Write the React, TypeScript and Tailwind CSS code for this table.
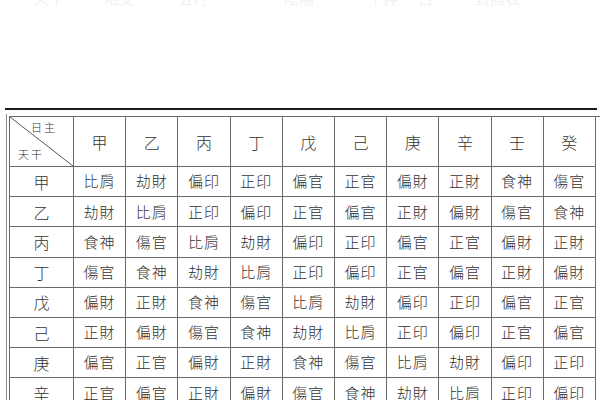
import React from "react";

const STEMS = ["甲", "乙", "丙", "丁", "戊", "己", "庚", "辛", "壬", "癸"];

const ROWS: [string, string[]][] = [
  ["甲", ["比肩", "劫財", "偏印", "正印", "偏官", "正官", "偏財", "正財", "食神", "傷官"]],
  ["乙", ["劫財", "比肩", "正印", "偏印", "正官", "偏官", "正財", "偏財", "傷官", "食神"]],
  ["丙", ["食神", "傷官", "比肩", "劫財", "偏印", "正印", "偏官", "正官", "偏財", "正財"]],
  ["丁", ["傷官", "食神", "劫財", "比肩", "正印", "偏印", "正官", "偏官", "正財", "偏財"]],
  ["戊", ["偏財", "正財", "食神", "傷官", "比肩", "劫財", "偏印", "正印", "偏官", "正官"]],
  ["己", ["正財", "偏財", "傷官", "食神", "劫財", "比肩", "正印", "偏印", "正官", "偏官"]],
  ["庚", ["偏官", "正官", "偏財", "正財", "食神", "傷官", "比肩", "劫財", "偏印", "正印"]],
  ["辛", ["正官", "偏官", "正財", "偏財", "傷官", "食神", "劫財", "比肩", "正印", "偏印"]],
];

// faint leftovers of the line above, cut off by the top edge
const TOP_BITS = [
  { ml: "ml-[34px]", t: "天干" },
  { ml: "ml-[40px]", t: "地支" },
  { ml: "ml-[44px]", t: "五行" },
  { ml: "ml-[76px]", t: "陰陽" },
  { ml: "ml-[54px]", t: "十神" },
  { ml: "ml-[20px]", t: "日" },
  { ml: "ml-[42px]", t: "對照表" },
];

const cjk = "font-['Noto_Sans_CJK_TC','Noto_Sans_CJK_SC',sans-serif]";

export default function App() {
  return (
    <div className={`w-[600px] h-[400px] overflow-hidden bg-white ${cjk}`}>
      {/* cut-off text band */}
      <div className="h-[10px] overflow-hidden">
        <div className="flex -mt-[10px] text-[15px] leading-[15px] text-[#f1f1f1]">
          {TOP_BITS.map((b, i) => (
            <span key={i} className={b.ml}>
              {b.t}
            </span>
          ))}
        </div>
      </div>

      <div className="mt-[98px] ml-[5px] mr-[3px] border-t-2 border-[#1a1a1a]" />

      <div className="ml-[6px] mt-[4px] border-l border-[#8a8a8a] pl-[2px] pt-[2px]">
        <div className="grid grid-cols-[64px_repeat(10,52.2px)] border-l border-t border-[#6b6b6b] text-[#333]">
          {/* corner cell */}
          <div className="relative h-[50px] border-r border-b border-[#6b6b6b]">
            <svg className="absolute inset-0" width="63" height="49" viewBox="0 0 63 49">
              <line x1="0" y1="0" x2="63" y2="49" stroke="#555" strokeWidth="1" />
            </svg>
            <span className="absolute right-[16px] top-[5px] text-[11px] leading-none tracking-[2px] font-light">
              日主
            </span>
            <span className="absolute left-[8px] bottom-[6px] text-[11px] leading-none tracking-[2px] font-light">
              天干
            </span>
          </div>
          {STEMS.map((s) => (
            <div
              key={s}
              className="h-[50px] flex items-center justify-center border-r border-b border-[#6b6b6b] text-[16px] font-light"
            >
              {s}
            </div>
          ))}

          {ROWS.map(([stem, cells]) => (
            <React.Fragment key={stem}>
              <div className="h-[30.2px] flex items-center justify-center border-r border-b border-[#6b6b6b] text-[16px] font-light">
                {stem}
              </div>
              {cells.map((c, i) => (
                <div
                  key={i}
                  className="h-[30.2px] flex items-center justify-center border-r border-b border-[#6b6b6b] text-[15px] font-light tracking-[1px]"
                >
                  {c}
                </div>
              ))}
            </React.Fragment>
          ))}
        </div>
      </div>
    </div>
  );
}
